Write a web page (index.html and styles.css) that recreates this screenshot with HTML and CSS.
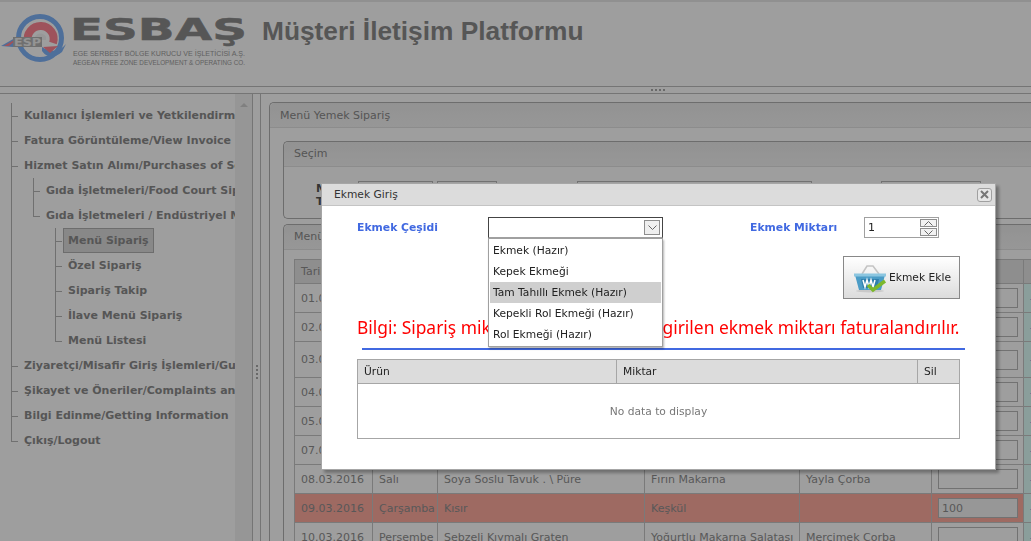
FILE: index.html
```html
<html>
  <head>
    <title>Müşteri İletişim Platformu</title>
    <link rel="stylesheet" href="styles.css">
  </head>

  <body>
    <div class="page">
      <div class="top">
        <svg class="logo" width="250" height="70" viewBox="0 0 250 70">
          <path d="M42 37Q56 46 66 34L62 42Q50 52 42 41z" fill="#7fb3f8"/>
          <circle cx="40" cy="28" r="21.500" fill="none" stroke="#7fb3f8" stroke-width="5"/>
          <path d="M28 32A13 13 0 1 1 53 33" fill="none" stroke="#ff8593" stroke-width="8"/>
          <path d="M35 27A6 6 0 0 1 46 27L46 30L35 30z" fill="#f4f4f4"/>
          <path d="M43 37L58 36L50 43z" fill="#ff8593"/>
          <path d="M1 36L15 28L18 28L13 37z" fill="#7fb3f8"/>
          <path d="M4 36L14 30L15 31L9 36z" fill="#ff8593"/>
          <rect x="13" y="27" width="29" height="10" fill="#b4b4b4"/>
          <text class="logo-esp" x="14" y="36" textLength="27" lengthAdjust="spacingAndGlyphs">ESP</text>
          <text class="logo-name" x="70" y="29.500" textLength="177" lengthAdjust="spacingAndGlyphs">ESBAŞ</text>
          <text class="logo-sub" x="73" y="46" textLength="172" lengthAdjust="spacingAndGlyphs">EGE SERBEST BÖLGE KURUCU VE İŞLETİCİSİ A.Ş.</text>
          <text class="logo-sub" x="73" y="55" textLength="172" lengthAdjust="spacingAndGlyphs">AEGEAN FREE ZONE DEVELOPMENT &amp; OPERATING CO.</text>
        </svg>
        <h1 class="title">Müşteri İletişim Platformu</h1>
      </div>

      <div class="split-h"><span class="dots"></span></div>

      <div class="main">
        <div class="side">
          <ul class="tree">
            <li><a>Kullanıcı İşlemleri ve Yetkilendirme</a></li>
            <li><a>Fatura Görüntüleme/View Invoice</a></li>
            <li>
              <a>Hizmet Satın Alımı/Purchases of Services</a>
              <ul>
                <li><a>Gıda İşletmeleri/Food Court Sipariş</a></li>
                <li>
                  <a>Gıda İşletmeleri / Endüstriyel Mutfak</a>
                  <ul>
                    <li><a class="on">Menü Sipariş</a></li>
                    <li><a>Özel Sipariş</a></li>
                    <li><a>Sipariş Takip</a></li>
                    <li><a>İlave Menü Sipariş</a></li>
                    <li><a>Menü Listesi</a></li>
                  </ul>
                </li>
              </ul>
            </li>
            <li><a>Ziyaretçi/Misafir Giriş İşlemleri/Guest</a></li>
            <li><a>Şikayet ve Öneriler/Complaints and</a></li>
            <li><a>Bilgi Edinme/Getting Information</a></li>
            <li><a>Çıkış/Logout</a></li>
          </ul>
          <div class="side-scroll"><span class="arrow-up"></span></div>
        </div>

        <div class="split-v"><span class="dots-v"></span></div>

        <div class="content">
          <div class="box outer">
            <div class="box-head">Menü Yemek Sipariş</div>
            <div class="box-body">
              <div class="box">
                <div class="box-head">Seçim</div>
                <div class="pick">
                  <div class="pick-label">Menü<br>Tarih</div>
                  <div class="field w75"></div>
                  <div class="field w60"></div>
                  <div class="field w235"></div>
                  <div class="field w100"></div>
                </div>
              </div>

              <div class="box second">
                <div class="box-head">Menü</div>
                <div class="box-table">
                  <table class="menu">
                    <colgroup>
                      <col class="c1"><col class="c2"><col class="c3"><col class="c4"><col class="c5"><col class="c6"><col class="c7">
                    </colgroup>
                    <tr class="head"><th>Tarih</th><th>Gün</th><th>Yemek</th><th>Yemek</th><th>Çorba</th><th>Adet</th><th></th></tr>
                    <tr><td>01.03.2016</td><td></td><td></td><td></td><td></td><td><span class="qty"></span></td><td class="tail">-</td></tr>
                    <tr><td>02.03.2016</td><td></td><td></td><td></td><td></td><td><span class="qty"></span></td><td class="tail">-</td></tr>
                    <tr class="tall"><td>03.03.2016</td><td></td><td></td><td></td><td></td><td><span class="qty"></span></td><td class="tail">-</td></tr>
                    <tr><td>04.03.2016</td><td></td><td></td><td></td><td></td><td><span class="qty"></span></td><td class="tail">-</td></tr>
                    <tr><td>05.03.2016</td><td></td><td></td><td></td><td></td><td><span class="qty"></span></td><td class="tail">-</td></tr>
                    <tr><td>07.03.2016</td><td></td><td></td><td></td><td></td><td><span class="qty"></span></td><td class="tail">-</td></tr>
                    <tr><td>08.03.2016</td><td>Salı</td><td>Soya Soslu Tavuk . \ Püre</td><td>Fırın Makarna</td><td>Yayla Çorba</td><td><span class="qty"></span></td><td class="tail">-</td></tr>
                    <tr class="today"><td>09.03.2016</td><td>Çarşamba</td><td>Kısır</td><td>Keşkül</td><td></td><td><span class="qty">100</span></td><td class="tail">-</td></tr>
                    <tr><td>10.03.2016</td><td>Perşembe</td><td>Sebzeli Kıymalı Graten</td><td>Yoğurtlu Makarna Salatası</td><td>Mercimek Çorba</td><td><span class="qty"></span></td><td class="tail">-</td></tr>
                  </table>
                </div>
              </div>
            </div>
          </div>
        </div>
      </div>
    </div>

    <div class="shade"></div>

    <div class="dialog">
      <div class="dialog-head">
        <span>Ekmek Giriş</span>
        <span class="close">
          <svg width="9" height="9" viewBox="0 0 9 9"><path d="M1 1L8 8M8 1L1 8" stroke="#777" stroke-width="2" fill="none"/></svg>
        </span>
      </div>
      <div class="dialog-body">
        <div class="form-row">
          <label class="lbl lbl-type">Ekmek Çeşidi</label>
          <div class="combo">
            <span class="combo-btn">
              <svg width="9" height="6" viewBox="0 0 9 6"><path d="M.5 .5L4.500 4.500L8.500 .5" stroke="#666" fill="none"/></svg>
            </span>
            <ul class="combo-list">
              <li>Ekmek (Hazır)</li>
              <li>Kepek Ekmeği</li>
              <li class="hover">Tam Tahıllı Ekmek (Hazır)</li>
              <li>Kepekli Rol Ekmeği (Hazır)</li>
              <li>Rol Ekmeği (Hazır)</li>
            </ul>
          </div>
          <label class="lbl lbl-qty">Ekmek Miktarı</label>
          <div class="spin">
            <span>1</span>
            <span class="spin-btns">
              <span class="spin-btn"><svg width="9" height="5" viewBox="0 0 9 5"><path d="M.5 4.500L4.500 .5L8.500 4.500" stroke="#666" fill="none"/></svg></span>
              <span class="spin-btn"><svg width="9" height="5" viewBox="0 0 9 5"><path d="M.5 .5L4.500 4.500L8.500 .5" stroke="#666" fill="none"/></svg></span>
            </span>
          </div>
        </div>

        <div class="btn-row">
          <button class="add">
            <svg width="34" height="30" viewBox="0 0 34 30">
              <path d="M9 11L14 3H20L26 11" stroke="#c4c4c4" stroke-width="1.600" fill="none"/>
              <ellipse cx="17" cy="28" rx="14" ry="1.500" fill="#c9c9c9"/>
              <path d="M2 12H32L28 27H6z" fill="#4b9cc6"/>
              <rect x="1" y="10.500" width="32" height="3" fill="#8cc6e0"/>
              <path d="M8 16H26L24 25H10z" fill="#2f7fad"/>
              <path d="M10 17L12 24L14 17L16 24L18 17L20 24L22 17" stroke="#fff" stroke-width="1.500" fill="none"/>
              <path d="M15 22L20 27L32 18" stroke="#7cb82c" stroke-width="3.500" fill="none"/>
            </svg>
            <span>Ekmek Ekle</span>
          </button>
        </div>

        <p class="note">Bilgi: Sipariş miktarı değil, bu alanına girilen ekmek miktarı faturalandırılır.</p>
        <div class="note-line"></div>

        <div class="grid">
          <div class="grid-head">
            <span class="g1">Ürün</span><span class="g2">Miktar</span><span class="g3">Sil</span>
          </div>
          <div class="grid-empty">No data to display</div>
        </div>
      </div>
    </div>
  </body>
</html>
```

FILE: styles.css
```css
html,
body {
  margin: 0;
  padding: 0;
  height: 100%;
  overflow: hidden;
  background: #fff;
  font-family: "DejaVu Sans", sans-serif;
  font-size: 11px;
}

ul {
  list-style: none;
  margin: 0;
  padding: 0;
}

/* page behind the dialog */
.page {
  height: 541px;
  display: flex;
  flex-direction: column;
  overflow: hidden;
  background: #fff;
  color: #8a8a8a;
}

.top {
  height: 84px;
  border-top: 2px solid #e8e8e8;
  display: flex;
  flex: none;
}

.logo {
  flex: none;
  margin-top: 8px;
}

.logo-name {
  font: bold 30px "DejaVu Sans", sans-serif;
  fill: #8c8c8c;
  stroke: #8c8c8c;
  stroke-width: 0.5px;
}

.logo-esp {
  font: bold 11px "DejaVu Sans", sans-serif;
  fill: #efefef;
}

.logo-sub {
  font: 8px "Liberation Sans", sans-serif;
  fill: #9c9c9c;
}

.title {
  margin: 14px 0 0 12px;
  font: bold 26.3px "Liberation Sans", sans-serif;
  color: #8c8c8c;
}

.split-h {
  height: 6px;
  flex: none;
  border-top: 1px solid #bdbdbd;
  border-bottom: 1px solid #bdbdbd;
  display: flex;
  justify-content: center;
  align-items: center;
  padding-left: 285px;
}

.dots {
  width: 14px;
  height: 2px;
  background: repeating-linear-gradient(90deg, #aaa 0 2px, transparent 2px 4px);
}

.main {
  flex: 1;
  display: flex;
  min-height: 0;
}

.side {
  width: 253px;
  flex: none;
  box-sizing: border-box;
  border-right: 1px solid #bdbdbd;
  display: flex;
  overflow: hidden;
}

.tree {
  flex: 1;
  min-width: 0;
  overflow: hidden;
  padding: 9px 0 0 11px;
  font-weight: bold;
  color: #8c8c8c;
  white-space: nowrap;
}

.tree li {
  position: relative;
  padding-left: 13px;
}

.tree a {
  display: inline-block;
  height: 25px;
  line-height: 25px;
}

.tree ul {
  margin-left: -2px;
  padding-left: 11px;
}

/* tree lines */
.tree li::before {
  content: "";
  position: absolute;
  left: 0;
  top: 0;
  bottom: 0;
  border-left: 1px solid #b5b5b5;
}

.tree li:last-child::before {
  height: 13px;
  bottom: auto;
}

.tree li::after {
  content: "";
  position: absolute;
  left: 0;
  top: 13px;
  width: 7px;
  border-top: 1px solid #b5b5b5;
}

.tree a.on {
  background: #dcdcdc;
  border: 1px solid #b0b0b0;
  height: 23px;
  line-height: 23px;
  margin-left: -5px;
  padding: 0 4px;
}

.side-scroll {
  width: 17px;
  flex: none;
  background: #f2f2f2;
  display: flex;
  justify-content: center;
  padding-top: 9px;
  box-sizing: border-box;
}

.arrow-up {
  width: 0;
  height: 0;
  border: 4px solid transparent;
  border-top: 0;
  border-bottom: 4px solid #cfcfcf;
}

.split-v {
  width: 7px;
  flex: none;
  display: flex;
  align-items: center;
  justify-content: center;
}

.dots-v {
  width: 2px;
  height: 14px;
  margin-top: 108px;
  background: repeating-linear-gradient(0deg, #aaa 0 2px, transparent 2px 4px);
}

.content {
  flex: 1;
  min-width: 0;
  overflow: hidden;
  border-left: 1px solid #bdbdbd;
  padding: 8px 0 0 8px;
}

.box {
  border: 1px solid #b0b0b0;
  border-radius: 5px 0 0 5px;
  border-right: 0;
  color: #8a8a8a;
}

.outer {
  width: 1000px;
}

.box-head {
  height: 24px;
  line-height: 24px;
  padding-left: 10px;
  background: linear-gradient(#ececec, #f4f4f4);
  border-bottom: 1px solid #e2e2e2;
  border-radius: 5px 0 0 0;
}

.outer > .box-head {
  line-height: 26px;
}

.box-body {
  padding: 13px 0 0 13px;
}

.pick {
  height: 51px;
  display: flex;
  align-items: flex-start;
  padding-top: 14px;
  box-sizing: border-box;
}

.pick-label {
  width: 74px;
  flex: none;
  box-sizing: border-box;
  font-weight: bold;
  color: #555;
  padding: 1px 0 0 32px;
  line-height: 13px;
}

.field {
  height: 20px;
  border: 1px solid #b8b8b8;
  flex: none;
  box-sizing: border-box;
}

.w75 { width: 75px; }
.w60 { width: 60px; margin-left: 4px; }
.w235 { width: 235px; margin-left: 80px; }
.w100 { width: 100px; margin-left: 69px; }

.second {
  margin-top: 5px;
}

.box-table {
  padding: 9px 0 0 10px;
}

.menu {
  border-collapse: collapse;
  table-layout: fixed;
  width: 800px;
  font-size: 11px;
  color: #8f8f8f;
}

.c1 { width: 78px; }
.c2 { width: 65px; }
.c3 { width: 207px; }
.c4 { width: 155px; }
.c5 { width: 132px; }
.c6 { width: 92px; }
.c7 { width: 71px; }

.menu th,
.menu td {
  border: 1px solid #c6c6c6;
  padding: 0 6px;
  font-weight: normal;
  text-align: left;
  white-space: nowrap;
  overflow: hidden;
  height: 29px;
  box-sizing: border-box;
}

.menu .head th {
  background: #e6e6e6;
  height: 24px;
}

.menu tr.tall td {
  height: 36px;
}

.menu .today td {
  background: #ffab9f;
}

.menu td.tail {
  background: #dffffa;
  color: #4169e1;
}

.qty {
  display: block;
  height: 20px;
  line-height: 20px;
  width: 80px;
  box-sizing: border-box;
  border: 1px solid #b8b8b8;
  padding-left: 3px;
}

.today .qty {
  background: #f4f4f4;
}

.shade {
  position: fixed;
  inset: 0;
  background: rgba(0, 0, 0, 0.38);
}

/* dialog */
.dialog {
  position: fixed;
  left: 321px;
  top: 183px;
  width: 675px;
  height: 287px;
  box-sizing: border-box;
  border: 1px solid #a6a6a6;
  background: #fff;
  box-shadow: 3px 3px 3px rgba(0, 0, 0, 0.3);
  color: #222;
  font-size: 10.7px;
}

.dialog-head {
  height: 21px;
  line-height: 21px;
  background: #dcdcdc;
  border-bottom: 1px solid #c4c4c4;
  padding: 0 3px 0 12px;
  display: flex;
  justify-content: space-between;
  align-items: center;
  color: #333;
}

.close {
  width: 13px;
  height: 12px;
  border: 1px solid #a0a0a0;
  border-radius: 3px;
  background: #e6e6e6;
  display: flex;
  align-items: center;
  justify-content: center;
}

.dialog-body {
  padding: 11px 35px 0 35px;
}

.form-row {
  display: flex;
  align-items: flex-start;
  height: 21px;
}

.lbl {
  font-weight: bold;
  font-size: 10.8px;
  color: #4169e1;
  line-height: 21px;
}

.lbl-type {
  width: 131px;
  flex: none;
}

.lbl-qty {
  width: 114px;
  flex: none;
  margin-left: 87px;
}

.combo {
  position: relative;
  width: 175px;
  height: 21px;
  flex: none;
  box-sizing: border-box;
  border: 1px solid #444;
  border-bottom-color: #a0a0a0;
  display: flex;
  justify-content: flex-end;
  align-items: flex-start;
  padding: 2px 2px 0 0;
}

.combo-btn {
  width: 16px;
  height: 15px;
  box-sizing: border-box;
  border: 1px solid #8e8e8e;
  background: #efefef;
  display: flex;
  align-items: center;
  justify-content: center;
}

.combo-list {
  position: absolute;
  left: -1px;
  top: 20px;
  width: 175px;
  box-sizing: border-box;
  background: #fff;
  border: 1px solid #a0a0a0;
  box-shadow: 1px 2px 2px rgba(0, 0, 0, 0.3);
  padding: 1px;
  z-index: 2;
}

.combo-list li {
  height: 21px;
  line-height: 21px;
  padding-left: 3px;
  white-space: nowrap;
}

.combo-list .hover {
  background: #cfcfcf;
}

.spin {
  width: 75px;
  height: 21px;
  flex: none;
  box-sizing: border-box;
  border: 1px solid #a0a0a0;
  display: flex;
  justify-content: space-between;
  align-items: center;
  padding: 0 1px 0 3px;
  font-size: 11px;
}

.spin-btns {
  display: flex;
  flex-direction: column;
  gap: 1px;
}

.spin-btn {
  width: 17px;
  height: 8px;
  box-sizing: border-box;
  border: 1px solid #8e8e8e;
  background: #f2f2f2;
  display: flex;
  align-items: center;
  justify-content: center;
}

.btn-row {
  display: flex;
  justify-content: flex-end;
  margin-top: 18px;
}

.add {
  width: 117px;
  height: 43px;
  padding: 0 0 0 9px;
  border: 1px solid #888;
  background: linear-gradient(#fff, #dcdcdc);
  font: 10.7px "DejaVu Sans", sans-serif;
  color: #222;
  display: flex;
  align-items: center;
  gap: 2px;
}

.note {
  margin: 17px 0 0 0;
  font: 17.4px/22px "Noto Sans", sans-serif;
  color: #f00;
  white-space: nowrap;
}

.note-line {
  height: 2px;
  background: #4169e1;
  margin: 10px -5px 0 5px;
}

.grid {
  margin-top: 9px;
  border: 1px solid #a6a6a6;
  height: 80px;
  width: 603px;
  box-sizing: border-box;
}

.grid-head {
  height: 23px;
  line-height: 23px;
  background: #dcdcdc;
  border-bottom: 1px solid #a6a6a6;
  display: flex;
}

.grid-head span {
  padding-left: 6px;
  box-sizing: border-box;
}

.g1 { width: 259px; border-right: 1px solid #a6a6a6; }
.g2 { width: 301px; border-right: 1px solid #a6a6a6; }
.g3 { flex: 1; }

.grid-empty {
  height: 54px;
  display: flex;
  align-items: center;
  justify-content: center;
  color: #777;
}
```
